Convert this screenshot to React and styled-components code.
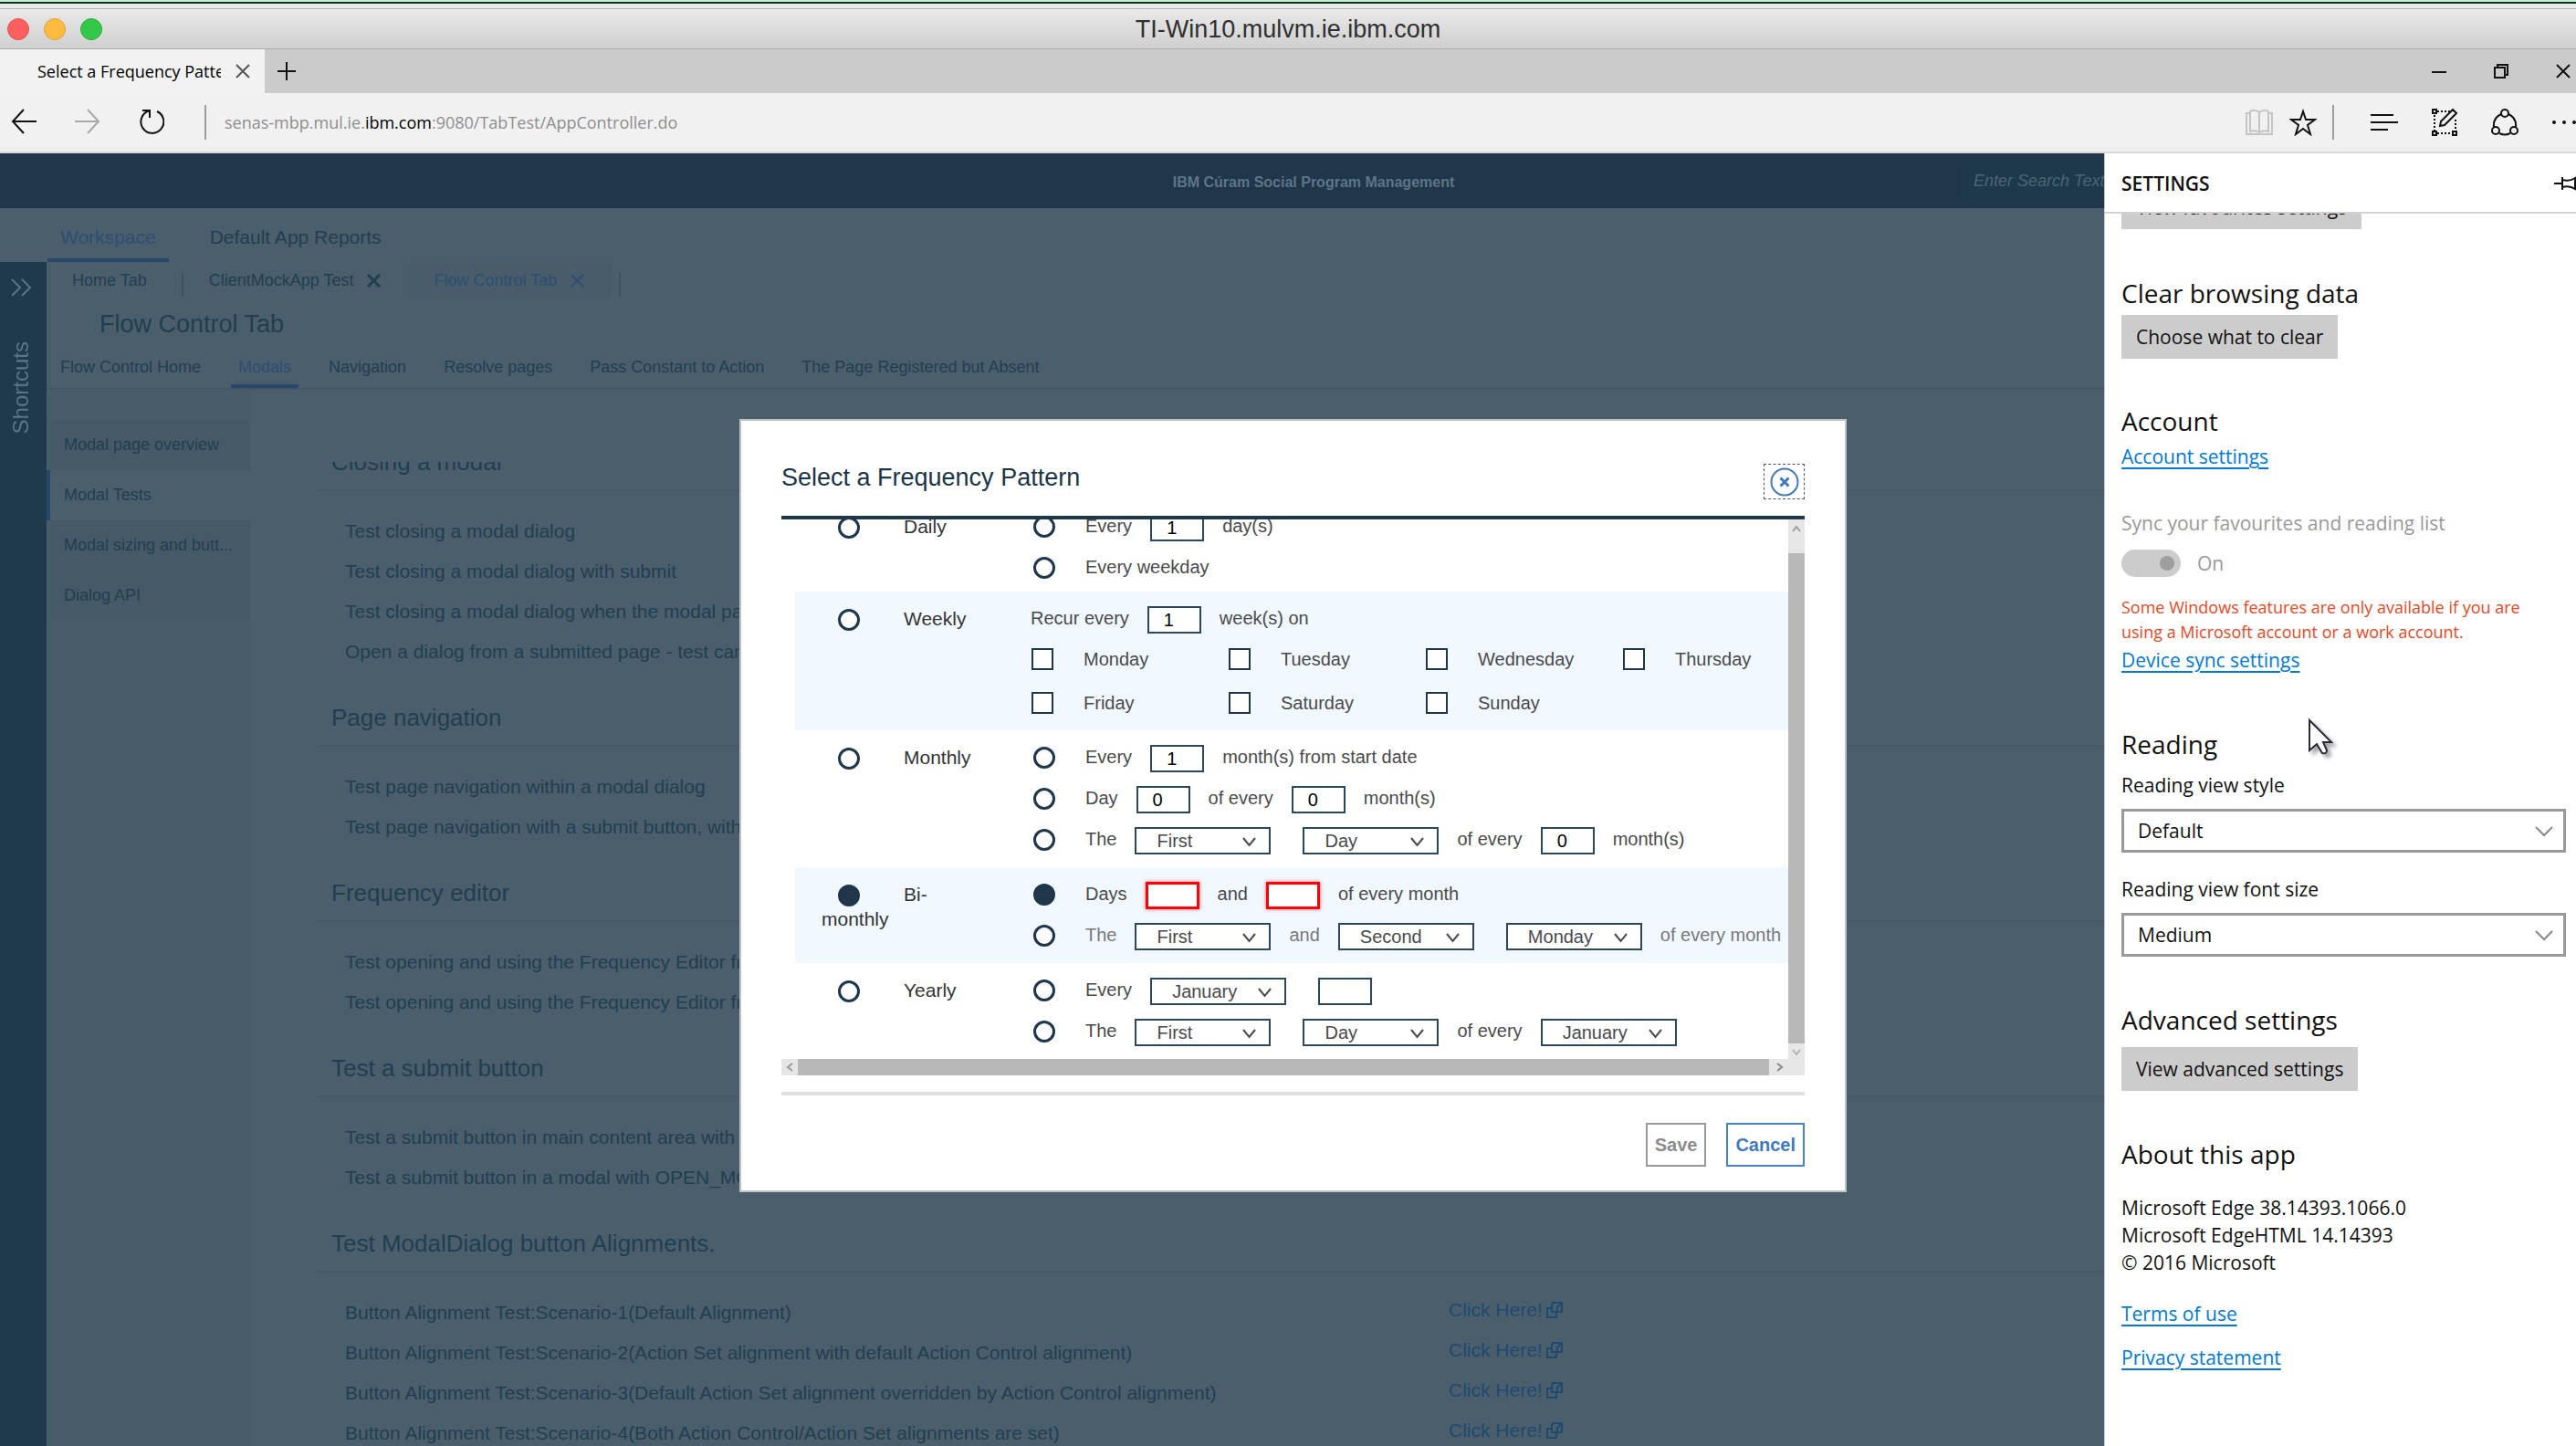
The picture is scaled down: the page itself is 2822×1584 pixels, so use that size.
import React from "react";
import styled, { createGlobalStyle, css } from "styled-components";

const navy = "#1f364b";
const slate = "#4b5e6c";
const ink = "#213f50";
const accent = "#29466c";
const helvetica = `"Liberation Sans", Arial, sans-serif`;
const segoe = `"Open Sans", "Noto Sans", sans-serif`;

const GlobalStyle = createGlobalStyle`
  *, *::before, *::after { box-sizing: border-box; }
  html, body, #root { height: 100%; }
  body { margin: 0; overflow: hidden; font-family: ${helvetica}; }
  h1, h2, h3, p, ul { margin: 0; padding: 0; font-weight: 400; }
  ul { list-style: none; }
  button, input, select { font: inherit; margin: 0; }
  a { color: inherit; text-decoration: none; }
`;

const Window = styled.div`
  height: 100vh;
  display: flex;
  flex-direction: column;
  background: ${slate};
`;

/* ---------- window frame ---------- */

const DesktopEdge = styled.div`
  height: 10px;
  flex: none;
  border-top: 2px solid #c9e8d3;
  border-bottom: 1px solid #b4b4b4;
  background: linear-gradient(#063a20 2px, #e9e9e9 2px);
`;

const TitleBar = styled.header`
  height: 44px;
  flex: none;
  display: grid;
  grid-template-columns: 1fr auto 1fr;
  align-items: center;
  padding: 0 8px;
  border-bottom: 1px solid #adadad;
  background: linear-gradient(#e9e9e9, #cfcfcf);
  color: #2f2f2f;
  font-size: 27px;
  line-height: 32px;
`;

const Lights = styled.div`
  display: flex;
  gap: 16px;
`;

const Light = styled.button`
  width: 24px;
  height: 24px;
  padding: 0;
  border: 1px solid ${(p) => p.$edge};
  border-radius: 50%;
  background: ${(p) => p.$fill};
`;

/* ---------- browser chrome ---------- */

const TabStrip = styled.div`
  height: 48px;
  flex: none;
  display: flex;
  background: #cbcbcb;
`;

const BrowserTab = styled.div`
  width: 290px;
  display: flex;
  align-items: center;
  gap: 16px;
  padding: 0 16px 0 41px;
  background: #f2f2f2;
`;

const BrowserTabTitle = styled.span`
  flex: 1;
  overflow: hidden;
  white-space: nowrap;
  font: 18px/28px ${segoe};
  color: #000;
`;

const IconButton = styled.button`
  display: flex;
  flex: none;
  padding: 0;
  border: 0;
  background: none;
  color: ${(p) => p.$color || "#111"};
`;

const NewTab = styled(IconButton)`
  align-items: center;
  padding: 0 14px;
`;

const WindowButtons = styled.div`
  display: flex;
  align-items: center;
  gap: 52px;
  margin-left: auto;
  padding-right: 6px;
`;

const Toolbar = styled.div`
  height: 66px;
  flex: none;
  display: flex;
  align-items: center;
  padding-left: 12px;
  border-bottom: 2px solid #d6d9da;
  background: #f1f1f1;
  overflow: hidden;
`;

const NavButtons = styled.div`
  display: flex;
  gap: 42px;
`;

const Divider = styled.span`
  width: 2px;
  height: 38px;
  flex: none;
  margin: 0 ${(p) => p.$right}px 0 ${(p) => p.$left}px;
  background: #9c9c9c;
`;

const Address = styled.div`
  flex: 1;
  font: 18px/28px ${segoe};
  color: #8e8e8e;

  b {
    font-weight: 400;
    color: #000;
  }
`;

const ToolGroup = styled.div`
  display: flex;
  flex: none;
  gap: ${(p) => p.$gap}px;
`;

/* ---------- application page ---------- */

const Page = styled.div`
  flex: 1;
  min-height: 0;
  position: relative;
  display: flex;
  flex-direction: column;
  overflow: hidden;
  color: ${ink};
`;

const AppHeader = styled.header`
  height: 60px;
  flex: none;
  display: flex;
  justify-content: center;
  align-items: center;
  position: relative;
  background: ${navy};
`;

const AppName = styled.h1`
  font-size: 16px;
  line-height: 24px;
  font-weight: 700;
  color: #5e7585;
  padding: 4px 0 0 56px;
`;

const Search = styled.input`
  position: absolute;
  top: 9px;
  right: 274px;
  width: 400px;
  height: 42px;
  padding: 0 14px;
  border: 0;
  background: #1e394c;
  font-size: 18px;
  font-style: italic;

  &::placeholder {
    color: #4c6475;
    opacity: 1;
  }
`;

const Sections = styled.nav`
  height: 59px;
  flex: none;
  display: flex;
  gap: 31px;
  padding-left: 52px;
`;

const SectionLink = styled.a`
  padding: 19px 14px 0;
  border-bottom: 4px solid ${(p) => (p.$active ? accent : "transparent")};
  color: ${(p) => (p.$active ? "#2c4f72" : ink)};
  font-size: 21px;
  line-height: 26px;
`;

const Workarea = styled.div`
  flex: 1;
  min-height: 0;
  display: flex;
`;

const Shortcuts = styled.aside`
  width: 51px;
  flex: none;
  display: flex;
  flex-direction: column;
  align-items: center;
  gap: 49px;
  padding: 18px 5px 0 0;
  background: #1e3a4c;
  color: #5c7584;
`;

const ShortcutsLabel = styled.span`
  writing-mode: vertical-rl;
  rotate: 180deg;
  font-size: 24px;
  line-height: 28px;
`;

const TabPane = styled.div`
  flex: 1;
  min-width: 0;
  display: flex;
  flex-direction: column;
`;

const AppTabs = styled.div`
  height: 40px;
  flex: none;
  display: flex;
  align-items: center;
`;

const AppTab = styled.div`
  display: flex;
  align-items: center;
  gap: 15px;
  height: 40px;
  padding: 0 30px 0 28px;
  background: ${(p) => (p.$active ? "#495c6a" : "none")};
  color: ${(p) => (p.$active ? "#2c4f72" : ink)};
  font-size: 18px;
  line-height: 24px;
`;

const TabRule = styled.span`
  width: 2px;
  height: 27px;
  margin: 8px 0 0 8px;
  background: #40525f;
`;

const PageTitle = styled.h2`
  height: 54px;
  flex: none;
  padding: 12px 0 0 58px;
  font-size: 27px;
  line-height: 32px;
`;

const PageNav = styled.nav`
  height: 46px;
  flex: none;
  display: flex;
  gap: 25px;
  padding-left: 7px;
  border-bottom: 2px solid #445664;
`;

const PageNavLink = styled.a`
  padding: 9px 8px 0;
  border-bottom: 4px solid ${(p) => (p.$active ? accent : "transparent")};
  color: ${(p) => (p.$active ? "#2c4f72" : ink)};
  font-size: 18px;
  line-height: 24px;
`;

const Body = styled.div`
  flex: 1;
  min-height: 0;
  display: flex;
`;

const SideNav = styled.ul`
  width: 223px;
  flex: none;
  padding-top: 33px;
  background: #495c6a;
`;

const SideItem = styled.li`
  height: 55px;
  padding: 0 16px 0 15px;
  border-left: 4px solid ${(p) => (p.$active ? accent : "transparent")};
  background: ${(p) => (p.$active ? slate : "#465967")};
  background-clip: padding-box;
  font-size: 18px;
  line-height: 55px;
  white-space: nowrap;
`;

const Main = styled.main`
  flex: 1;
  min-width: 0;
  margin-top: 79px;
  padding-left: 74px;
  overflow: hidden;
`;

const Scrolled = styled.div`
  margin-top: -30px;
`;

const Section = styled.section`
  padding-bottom: 20px;
`;

const SectionTitle = styled.h3`
  height: 62px;
  margin-bottom: 22px;
  padding-left: 15px;
  border-bottom: 2px solid #455866;
  font-size: 26px;
  line-height: 60px;
`;

const TestRow = styled.li`
  height: 44px;
  display: grid;
  grid-template-columns: 1209px 1fr;
  align-items: center;
  padding-left: 30px;
  font-size: 21px;
  line-height: 28px;
  white-space: nowrap;
`;

const ClickLink = styled.a`
  display: flex;
  align-items: center;
  gap: 4px;
  padding-bottom: 6px;
  color: #1f4a70;
`;

/* ---------- frequency dialog ---------- */

const Overlay = styled.div`
  position: absolute;
  inset: 0;
  display: grid;
  place-items: center;
  padding: 13px 0 0 11px;
`;

const Dialog = styled.section`
  width: 1213px;
  padding: 0 44px 26px;
  border: 2px solid #bfc3c7;
  background: #fff;
  color: #4a4a4c;
  font-size: 20px;
  line-height: 27px;
`;

const DialogHead = styled.header`
  display: flex;
  justify-content: space-between;
  align-items: flex-start;
  padding: 47px 0 18px;
  border-bottom: 4px solid ${navy};
`;

const DialogTitle = styled.h2`
  font-size: 27px;
  line-height: 30px;
  color: #1a3448;
`;

const CloseButton = styled.button`
  width: 45px;
  height: 39px;
  display: grid;
  place-items: center;
  padding: 0;
  border: 1px dashed #555;
  background: none;
`;

const ScrollFrame = styled.div`
  display: grid;
  grid-template-columns: 1fr 18px;
  grid-template-rows: auto 18px;
`;

const ScrollView = styled.div`
  min-width: 0;
  padding-left: 15px;
  overflow: hidden;
`;

const Patterns = styled.form`
  margin-top: -22px;
  white-space: nowrap;
`;

const Pattern = styled.div`
  display: grid;
  grid-template-columns: 258px 1fr;
  padding: 7px 0 8px;
  background: ${(p) => (p.$striped ? "#f1f8ff" : "#fff")};

  &:first-child {
    padding-bottom: 4px;
  }
`;

const Lead = styled.label`
  width: 204px;
  padding: 9px 0 0 29px;
  white-space: normal;
  font-size: 21px;
  color: #333335;
`;

const Line = styled.div`
  height: 45px;
  display: flex;
  align-items: center;
  gap: 20px;
  color: ${(p) => (p.$faded ? "#77797c" : "inherit")};
`;

const Radio = styled.input.attrs({ type: "radio" })`
  appearance: none;
  width: 24px;
  height: 24px;
  border: 3px solid ${navy};
  border-radius: 50%;
  background: #fff;
  vertical-align: middle;
  margin: ${(p) => (p.$lead ? "0 48px 0 18px" : "0 13px 0 3px")};

  &:checked {
    background: ${navy};
  }
`;

const Tick = styled.input.attrs({ type: "checkbox" })`
  appearance: none;
  width: 24px;
  height: 24px;
  margin: 0 33px 0 1px;
  border: 2px solid ${navy};
  background: #fff;
`;

const Days = styled.div`
  display: grid;
  grid-template-columns: repeat(4, 216px);
  grid-auto-rows: 44px;
  row-gap: 4px;
`;

const Day = styled.label`
  display: flex;
  align-items: center;
`;

const NumberBox = styled.input.attrs({ type: "text" })`
  width: 59px;
  height: 30px;
  margin-top: 3px;
  padding: 0 0 0 16px;
  border: 2px solid #2c465a;
  background: #fff;
  color: #000;

  ${(p) =>
    p.$invalid &&
    css`
      border: 3px solid #fb0007;
      box-shadow: 0 0 4px #ff5a5a;
    `}
`;

const Picker = styled.span`
  position: relative;
  display: flex;
  margin-top: 3px;

  & + &,
  & + input {
    margin-left: 15px;
  }

  svg {
    position: absolute;
    right: 16px;
    top: 11px;
    pointer-events: none;
  }
`;

const PickerSelect = styled.select`
  appearance: none;
  width: 149px;
  height: 30px;
  padding: 0 0 0 22px;
  border: 2px solid #2c465a;
  border-radius: 0;
  background: #fff;
  color: #4a4a4c;
`;

const BarY = styled.div`
  display: flex;
  flex-direction: column;
  justify-content: space-between;
  align-items: center;
  background: #e6e6e6;
`;

const BarX = styled.div`
  grid-column: 1 / 3;
  display: flex;
  align-items: center;
  justify-content: space-between;
  background: #e6e6e6;
`;

const ThumbY = styled.span`
  flex: 1;
  width: 18px;
  background: #b8b8b8;
`;

const ThumbX = styled.span`
  flex: 1;
  height: 18px;
  background: #b8b8b8;
`;

const BarCap = styled.span`
  display: flex;
  justify-content: center;
  ${(p) => (p.$w ? `width: ${p.$w}px;` : "")}
  ${(p) => (p.$h ? `height: ${p.$h}px; padding-top: 6px;` : "")}
`;

const DialogFoot = styled.footer`
  display: flex;
  justify-content: flex-end;
  gap: 22px;
  margin-top: 18px;
  padding-top: 30px;
  border-top: 4px solid #e0e0e0;
`;

const DialogButton = styled.button`
  height: 48px;
  padding: 0 8px;
  border: 2px solid ${(p) => (p.$primary ? "#4a80c8" : "#999")};
  background: #fff;
  color: ${(p) => (p.$primary ? "#4178be" : "#8c8c8c")};
  font-weight: 700;
  font-size: 20px;
`;

/* ---------- browser settings pane ---------- */

const Settings = styled.aside`
  position: absolute;
  inset: 0 0 0 auto;
  width: 517px;
  display: flex;
  flex-direction: column;
  border-left: 1px solid #c3c8cc;
  background: #fff;
  color: #111;
  font: 21px/30px ${segoe};
`;

const SettingsHead = styled.header`
  height: 66px;
  flex: none;
  display: flex;
  align-items: center;
  justify-content: space-between;
  padding: 2px 0 0 18px;
  border-bottom: 2px solid #d2d2d2;
  font-weight: 600;
`;

const SettingsBody = styled.div`
  flex: 1;
  min-height: 0;
  overflow: hidden;
  padding: 0 11px 0 18px;
`;

const Group = styled.section`
  display: flex;
  flex-direction: column;
  align-items: flex-start;
  margin-bottom: ${(p) => p.$after}px;
`;

const GroupTitle = styled.h2`
  margin-bottom: ${(p) => (p.$roomy ? 10 : 4)}px;
  font-size: 28px;
  line-height: 40px;
`;

const GrayButton = styled.button`
  height: 48px;
  padding: 0 16px;
  border: 0;
  background: #ccc;
  color: #111;
  ${(p) => p.$scrolled && "margin-top: -31px;"}
`;

const Link = styled.a`
  color: #0078d7;
  text-decoration: underline;
  text-underline-offset: 4px;
`;

const Muted = styled.p`
  margin-top: 43px;
  color: #999;
`;

const ToggleLabel = styled.label`
  display: flex;
  align-items: center;
  gap: 18px;
  margin-top: 14px;
  color: #999;
`;

const Toggle = styled.input.attrs({ type: "checkbox" })`
  appearance: none;
  width: 65px;
  height: 30px;
  padding: 7px;
  display: flex;
  justify-content: flex-end;
  border-radius: 15px;
  background: #ccc;

  &::before {
    content: "";
    width: 16px;
    height: 16px;
    border-radius: 50%;
    background: #9e9e9e;
  }
`;

const Warning = styled.p`
  margin: 20px 0 2px;
  font-size: 18px;
  line-height: 27px;
  color: #e8481f;
`;

const FieldLabel = styled.label`
  margin-bottom: 11px;
`;

const WideSelect = styled.span`
  position: relative;
  display: flex;
  width: 100%;
  margin-bottom: ${(p) => p.$after || 0}px;

  select {
    appearance: none;
    width: 100%;
    height: 48px;
    padding: 0 16px 0 15px;
    border: 3px solid #999;
    border-radius: 0;
    background: #fff;
    color: #111;
  }

  svg {
    position: absolute;
    right: 14px;
    top: 19px;
    pointer-events: none;
  }
`;

const About = styled.p`
  margin: 14px 0 26px;
`;

const Pointer = styled.svg`
  position: absolute;
  left: 223px;
  top: 619px;
  overflow: visible;
  filter: drop-shadow(4px 4px 2px rgba(0, 0, 0, 0.35));
`;

/* ---------- drawings ---------- */

const Svg = ({ w, h, children, stroke = 2, ...rest }) => (
  <svg width={w} height={h} viewBox={`0 0 ${w} ${h}`} fill="none" stroke="currentColor" strokeWidth={stroke} aria-hidden="true" {...rest}>
    {children}
  </svg>
);

const Cross = ({ size = 16, stroke = 2 }) => (
  <Svg w={size} h={size} stroke={stroke}>
    <path d={`M1 1L${size - 1} ${size - 1}M${size - 1} 1L1 ${size - 1}`} />
  </Svg>
);

const Chevron = ({ w, h, stroke = 2, color }) => (
  <Svg w={w} h={h} stroke={stroke} style={{ color }}>
    <path d={`M1 1L${w / 2} ${h - 2}L${w - 1} 1`} />
  </Svg>
);

const PopOut = () => (
  <Svg w={18} h={18}>
    <path d="M7 3V1h10v10h-4M7 3H6v8h6v-4M11 7l5-5M6 7H1v10h10v-5" />
  </Svg>
);

/* ---------- data ---------- */

const tests = [
  {
    title: "Closing a modal",
    rows: [
      "Test closing a modal dialog",
      "Test closing a modal dialog with submit",
      "Test closing a modal dialog when the modal page is dirty",
      "Open a dialog from a submitted page - test cancel",
    ],
  },
  {
    title: "Page navigation",
    rows: ["Test page navigation within a modal dialog", "Test page navigation with a submit button, within a modal"],
  },
  {
    title: "Frequency editor",
    rows: ["Test opening and using the Frequency Editor from a page", "Test opening and using the Frequency Editor from a modal"],
  },
  {
    title: "Test a submit button",
    rows: ["Test a submit button in main content area with a link", "Test a submit button in a modal with OPEN_MODAL set"],
  },
  {
    title: "Test ModalDialog button Alignments.",
    linked: true,
    rows: [
      "Button Alignment Test:Scenario-1(Default Alignment)",
      "Button Alignment Test:Scenario-2(Action Set alignment with default Action Control alignment)",
      "Button Alignment Test:Scenario-3(Default Action Set alignment overridden by Action Control alignment)",
      "Button Alignment Test:Scenario-4(Both Action Control/Action Set alignments are set)",
    ],
  },
];

const pageLinks = ["Flow Control Home", "Modals", "Navigation", "Resolve pages", "Pass Constant to Action", "The Page Registered but Absent"];
const sideLinks = ["Modal page overview", "Modal Tests", "Modal sizing and butt...", "Dialog API"];
const weekdays = ["Monday", "Tuesday", "Wednesday", "Thursday", "Friday", "Saturday", "Sunday"];

const Pick = ({ value, label }) => (
  <Picker>
    <PickerSelect aria-label={label} defaultValue={value}>
      <option>{value}</option>
    </PickerSelect>
    <Chevron w={15} h={11} color="#4a4a4c" />
  </Picker>
);

const Box = ({ value = "", label, invalid }) => <NumberBox aria-label={label} defaultValue={value} $invalid={invalid} />;

const Option = ({ group, label, checked, faded, children }) => (
  <Line $faded={faded}>
    <Radio name={group} aria-label={label} defaultChecked={checked} />
    {children}
  </Line>
);

const Frequency = ({ name, striped, checked, children }) => (
  <Pattern $striped={striped}>
    <Lead>
      <Radio $lead name="pattern" defaultChecked={checked} />
      {name}
    </Lead>
    <div>{children}</div>
  </Pattern>
);

function FrequencyDialog() {
  return (
    <Overlay>
      <Dialog role="dialog" aria-labelledby="dialog-title">
        <DialogHead>
          <DialogTitle id="dialog-title">Select a Frequency Pattern</DialogTitle>
          <CloseButton aria-label="Close">
            <Svg w={32} h={32} style={{ color: "#4178be" }}>
              <circle cx="16" cy="16" r="14.5" />
              <path d="M11.5 11.5l9 9M20.5 11.5l-9 9" strokeWidth="3" />
            </Svg>
          </CloseButton>
        </DialogHead>
        <ScrollFrame>
          <ScrollView>
            <Patterns>
              <Frequency name="Daily">
                <Option group="daily" label="Every number of days">
                  <span>Every</span>
                  <Box value="1" label="Days" />
                  <span>day(s)</span>
                </Option>
                <Option group="daily" label="Every weekday">
                  <span>Every weekday</span>
                </Option>
              </Frequency>
              <Frequency name="Weekly" striped>
                <Line>
                  <span>Recur every</span>
                  <Box value="1" label="Weeks" />
                  <span>week(s) on</span>
                </Line>
                <Days>
                  {weekdays.map((d) => (
                    <Day key={d}>
                      <Tick />
                      {d}
                    </Day>
                  ))}
                </Days>
              </Frequency>
              <Frequency name="Monthly">
                <Option group="monthly" label="Months from start date">
                  <span>Every</span>
                  <Box value="1" label="Months" />
                  <span>month(s) from start date</span>
                </Option>
                <Option group="monthly" label="Day of month">
                  <span>Day</span>
                  <Box value="0" label="Day" />
                  <span>of every</span>
                  <Box value="0" label="Months" />
                  <span>month(s)</span>
                </Option>
                <Option group="monthly" label="Weekday of month">
                  <span>The</span>
                  <Pick value="First" label="Week" />
                  <Pick value="Day" label="Weekday" />
                  <span>of every</span>
                  <Box value="0" label="Months" />
                  <span>month(s)</span>
                </Option>
              </Frequency>
              <Frequency name="Bi-monthly" striped checked>
                <Option group="bimonthly" label="Two days of every month" checked>
                  <span>Days</span>
                  <Box label="First day" invalid />
                  <span>and</span>
                  <Box label="Second day" invalid />
                  <span>of every month</span>
                </Option>
                <Option group="bimonthly" label="Two weekdays of every month" faded>
                  <span>The</span>
                  <Pick value="First" label="First week" />
                  <span>and</span>
                  <Pick value="Second" label="Second week" />
                  <Pick value="Monday" label="Weekday" />
                  <span>of every month</span>
                </Option>
              </Frequency>
              <Frequency name="Yearly">
                <Option group="yearly" label="Every date">
                  <span>Every</span>
                  <Pick value="January" label="Month" />
                  <Box label="Day of month" />
                </Option>
                <Option group="yearly" label="Weekday of the year">
                  <span>The</span>
                  <Pick value="First" label="Week" />
                  <Pick value="Day" label="Weekday" />
                  <span>of every</span>
                  <Pick value="January" label="Month" />
                </Option>
              </Frequency>
            </Patterns>
          </ScrollView>
          <BarY>
            <BarCap $h={37}>
              <Svg w={10} h={8} style={{ color: "#9a9a9a" }}>
                <path d="M1 7l4-5 4 5" />
              </Svg>
            </BarCap>
            <ThumbY />
            <BarCap $h={17}>
              <Svg w={10} h={8} style={{ color: "#b0b0b0" }}>
                <path d="M1 1l4 5 4-5" />
              </Svg>
            </BarCap>
          </BarY>
          <BarX>
            <BarCap $w={18}>
              <Svg w={8} h={10} style={{ color: "#9a9a9a" }}>
                <path d="M7 1L2 5l5 4" />
              </Svg>
            </BarCap>
            <ThumbX />
            <BarCap $w={39}>
              <Svg w={24} h={10} style={{ color: "#8a8a8a" }}>
                <path d="M1 1l5 4-5 4" />
              </Svg>
            </BarCap>
          </BarX>
        </ScrollFrame>
        <DialogFoot>
          <DialogButton>Save</DialogButton>
          <DialogButton $primary>Cancel</DialogButton>
        </DialogFoot>
      </Dialog>
    </Overlay>
  );
}

function SettingsPane() {
  return (
    <Settings>
      <SettingsHead>
        SETTINGS
        <IconButton aria-label="Pin this pane">
          <Svg w={24} h={16}>
            <path d="M0 8h9M9 1v14M9 4q8 2 14-2v12q-6-4-14-2M24 1v14" />
          </Svg>
        </IconButton>
      </SettingsHead>
      <SettingsBody>
        <Group $after={50}>
          <GrayButton $scrolled>View favourites settings</GrayButton>
        </Group>
        <Group $after={48}>
          <GroupTitle>Clear browsing data</GroupTitle>
          <GrayButton>Choose what to clear</GrayButton>
        </Group>
        <Group $after={57}>
          <GroupTitle>Account</GroupTitle>
          <Link href="#account">Account settings</Link>
          <Muted>Sync your favourites and reading list</Muted>
          <ToggleLabel>
            <Toggle defaultChecked disabled />
            On
          </ToggleLabel>
          <Warning>
            Some Windows features are only available if you are
            <br />
            using a Microsoft account or a work account.
          </Warning>
          <Link href="#sync">Device sync settings</Link>
        </Group>
        <Group $after={49}>
          <GroupTitle $roomy>Reading</GroupTitle>
          <FieldLabel htmlFor="view-style">Reading view style</FieldLabel>
          <WideSelect $after={25}>
            <select id="view-style" defaultValue="Default">
              <option>Default</option>
            </select>
            <Chevron w={20} h={12} color="#888" />
          </WideSelect>
          <FieldLabel htmlFor="font-size">Reading view font size</FieldLabel>
          <WideSelect>
            <select id="font-size" defaultValue="Medium">
              <option>Medium</option>
            </select>
            <Chevron w={20} h={12} color="#888" />
          </WideSelect>
        </Group>
        <Group $after={49}>
          <GroupTitle $roomy>Advanced settings</GroupTitle>
          <GrayButton>View advanced settings</GrayButton>
        </Group>
        <Group $after={18}>
          <GroupTitle $roomy>About this app</GroupTitle>
          <About>
            Microsoft Edge 38.14393.1066.0
            <br />
            Microsoft EdgeHTML 14.14393
            <br />© 2016 Microsoft
          </About>
          <Link href="#terms">Terms of use</Link>
        </Group>
        <Link href="#privacy">Privacy statement</Link>
      </SettingsBody>
      <Pointer width="27" height="40" viewBox="0 0 27 40" fill="#fff" stroke="#2b2b38" strokeWidth="2" aria-hidden="true">
        <path d="M1 2V35L9 28L15 38Q20 39 20 35L16 26H25Z" />
      </Pointer>
    </Settings>
  );
}

export default function App() {
  return (
    <>
      <GlobalStyle />
      <Window>
        <DesktopEdge />
        <TitleBar>
          <Lights>
            <Light aria-label="Close" $fill="#fc605c" $edge="#e2544f" />
            <Light aria-label="Minimise" $fill="#fdbc40" $edge="#e0a233" />
            <Light aria-label="Zoom" $fill="#34c84a" $edge="#2bac3c" />
          </Lights>
          <span>TI-Win10.mulvm.ie.ibm.com</span>
        </TitleBar>
        <TabStrip>
          <BrowserTab>
            <BrowserTabTitle>Select a Frequency Pattern</BrowserTabTitle>
            <IconButton aria-label="Close tab" $color="#555">
              <Cross size={16} />
            </IconButton>
          </BrowserTab>
          <NewTab aria-label="New tab">
            <Svg w={20} h={20}>
              <path d="M10 0v20M0 10h20" />
            </Svg>
          </NewTab>
          <WindowButtons>
            <IconButton aria-label="Minimise window">
              <Svg w={16} h={16}>
                <path d="M0 9h16" />
              </Svg>
            </IconButton>
            <IconButton aria-label="Restore window">
              <Svg w={16} h={16}>
                <path d="M1 4h11v11H1zM4 4V1h11v11h-3" />
              </Svg>
            </IconButton>
            <IconButton aria-label="Close window">
              <Cross size={16} />
            </IconButton>
          </WindowButtons>
        </TabStrip>
        <Toolbar>
          <NavButtons>
            <IconButton aria-label="Back">
              <Svg w={28} h={28}>
                <path d="M28 14H2M14 1L2 14l12 13" />
              </Svg>
            </IconButton>
            <IconButton aria-label="Forward" $color="#a8a8a8">
              <Svg w={28} h={28}>
                <path d="M0 14h26M14 1l12 13-12 13" />
              </Svg>
            </IconButton>
            <IconButton aria-label="Refresh">
              <Svg w={28} h={30}>
                <path d="M20 3a12.500 12.500 0 1 1-9-0.500M4 2h8v8" />
              </Svg>
            </IconButton>
          </NavButtons>
          <Divider $left={44} $right={20} />
          <Address>
            senas-mbp.mul.ie.<b>ibm.com</b>:9080/TabTest/AppController.do
          </Address>
          <ToolGroup $gap={18}>
            <IconButton aria-label="Reading view" $color="#c4c4c4">
              <Svg w={30} h={30}>
                <path d="M15 4Q10 0 5 3V25Q10 23 15 26Q20 23 25 25V3Q20 0 15 4V26M5 5H1V28H29V5H25" />
              </Svg>
            </IconButton>
            <IconButton aria-label="Add to favourites">
              <Svg w={30} h={30}>
                <path d="M15 3l3 9h10l-8 6 3 10-8-6-8 6 3-10-8-6h10z" />
              </Svg>
            </IconButton>
          </ToolGroup>
          <Divider $left={17} $right={40} />
          <ToolGroup $gap={37}>
            <IconButton aria-label="Hub">
              <Svg w={30} h={30}>
                <path d="M0 7h25M0 15h30M0 23h19" />
              </Svg>
            </IconButton>
            <IconButton aria-label="Make a web note">
              <Svg w={28} h={30}>
                <path d="M6 3h14M3 7v17M6 27h18M26 12v12" strokeDasharray="2 2" />
                <path d="M1 1h4v4H1zM1 25h4v4H1zM23 25h4v4h-4zM9 19l1-5L23 1l4 4-13 13z" />
              </Svg>
            </IconButton>
            <IconButton aria-label="Share">
              <Svg w={30} h={30}>
                <circle cx="15" cy="5" r="4" />
                <circle cx="5" cy="24" r="4" />
                <circle cx="25" cy="24" r="4" />
                <path d="M11 6Q2 10 3 20M19 6Q28 10 27 20M9 27Q15 30 21 27" />
              </Svg>
            </IconButton>
            <IconButton aria-label="More">
              <Svg w={26} h={30}>
                <g fill="currentColor" stroke="none">
                  <circle cx="2" cy="15" r="2" />
                  <circle cx="13" cy="15" r="2" />
                  <circle cx="24" cy="15" r="2" />
                </g>
              </Svg>
            </IconButton>
          </ToolGroup>
        </Toolbar>
        <Page>
          <AppHeader>
            <AppName>IBM Cúram Social Program Management</AppName>
            <Search aria-label="Search" placeholder="Enter Search Text" />
          </AppHeader>
          <Sections>
            <SectionLink href="#workspace" $active>
              Workspace
            </SectionLink>
            <SectionLink href="#reports">Default App Reports</SectionLink>
          </Sections>
          <Workarea>
            <Shortcuts>
              <Svg w={24} h={20}>
                <path d="M2 1l9 9-9 9M13 1l9 9-9 9" />
              </Svg>
              <ShortcutsLabel>Shortcuts</ShortcutsLabel>
            </Shortcuts>
            <TabPane>
              <AppTabs>
                <AppTab>Home Tab</AppTab>
                <TabRule />
                <AppTab>
                  ClientMockApp Test <Cross size={15} stroke={3} />
                </AppTab>
                <AppTab $active>
                  Flow Control Tab <Cross size={15} />
                </AppTab>
                <TabRule />
              </AppTabs>
              <PageTitle>Flow Control Tab</PageTitle>
              <PageNav>
                {pageLinks.map((t) => (
                  <PageNavLink key={t} href="#page" $active={t === "Modals"}>
                    {t}
                  </PageNavLink>
                ))}
              </PageNav>
              <Body>
                <SideNav>
                  {sideLinks.map((t) => (
                    <SideItem key={t} $active={t === "Modal Tests"}>
                      <a href="#side">{t}</a>
                    </SideItem>
                  ))}
                </SideNav>
                <Main>
                  <Scrolled>
                    {tests.map((s) => (
                      <Section key={s.title}>
                        <SectionTitle>{s.title}</SectionTitle>
                        <ul>
                          {s.rows.map((r) => (
                            <TestRow key={r}>
                              <span>{r}</span>
                              {s.linked && (
                                <ClickLink href="#open">
                                  Click Here! <PopOut />
                                </ClickLink>
                              )}
                            </TestRow>
                          ))}
                        </ul>
                      </Section>
                    ))}
                  </Scrolled>
                </Main>
              </Body>
            </TabPane>
          </Workarea>
          <FrequencyDialog />
          <SettingsPane />
        </Page>
      </Window>
    </>
  );
}
